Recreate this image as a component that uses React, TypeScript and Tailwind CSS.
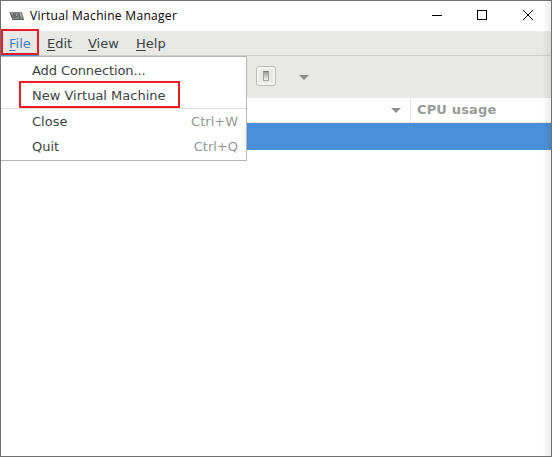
import React from "react";

const menus = [
  { label: "File", width: "w-[38px]", color: "text-[#3f7fc9]" },
  { label: "Edit", width: "w-[41px]", color: "text-[#3c4245]" },
  { label: "View", width: "w-[48px]", color: "text-[#3c4245]" },
  { label: "Help", width: "w-[48px]", color: "text-[#3c4245]" },
];

function AppIcon() {
  return (
    <svg width="16" height="10" viewBox="0 0 16 10" className="block shrink-0">
      <path d="M0.500 1h12.500l2 7H3z" fill="#858687" />
      <path d="M1 1.500l2.500 5.500 1.500-5M6 7V2.500l2 3.500 1.500-3.500L11 7" fill="none" stroke="#55585a" strokeWidth="1" />
      <path d="M2.500 1.500l1.500 2M7 3l1 2M11 2l1.500 4" stroke="#c9c9c9" strokeWidth="0.800" />
      <path d="M3 8.500h12" stroke="#606162" />
    </svg>
  );
}

function TitleBar() {
  return (
    <header className="flex h-[30px] shrink-0 items-center bg-white pl-2">
      <AppIcon />
      <h1 className="ml-[5px] font-['Open_Sans','Noto_Sans',sans-serif] text-[12px] leading-[16px] tracking-[0.31px] text-black whitespace-nowrap">
        Virtual Machine Manager
      </h1>
      <div className="ml-auto flex items-center">
        <svg width="46" height="30" viewBox="0 0 46 30" shapeRendering="crispEdges">
          <path d="M18 14.500h10" stroke="#000" />
        </svg>
        <svg width="45" height="30" viewBox="0 0 45 30" shapeRendering="crispEdges">
          <path d="M17.500 9.500h9v9h-9z" fill="none" stroke="#000" />
        </svg>
        <svg width="46" height="30" viewBox="0 0 46 30">
          <path d="M18 9l10 10M28 9L18 19" stroke="#000" />
        </svg>
      </div>
    </header>
  );
}

function MenuRow({ label, shortcut, height }: { label: string; shortcut?: string; height: string }) {
  return (
    <div className={`flex items-center justify-between pl-[30px] pr-2 text-[#3c4245] ${height}`}>
      <span>{label}</span>
      {shortcut && <span className="text-[#949796]">{shortcut}</span>}
    </div>
  );
}

function FileMenu() {
  return (
    <div className="absolute top-[55px] left-0 z-10 h-[105px] w-[246px] border border-l-0 border-[#b6b6b3] bg-white pl-px">
      <div className="h-[26px] pt-px tracking-[-0.1px]">
        <MenuRow label="Add Connection..." height="h-[25px]" />
      </div>
      <MenuRow label="New Virtual Machine" height="h-[25px]" />
      <div className="-ml-px h-px bg-[#dededc]" />
      <MenuRow label="Close" shortcut="Ctrl+W" height="h-[25px]" />
      <MenuRow label="Quit" shortcut="Ctrl+Q" height="h-[25px]" />
      <div className="absolute top-[24px] left-[18px] h-[27px] w-[161px] border-2 border-[#ed1c24]" />
    </div>
  );
}

function Arrow() {
  return (
    <svg width="10" height="5" viewBox="0 0 10 5" className="block">
      <path d="M0 0h10L5 5z" fill="#8b8e8b" />
    </svg>
  );
}

export default function App() {
  return (
    <div className="relative flex h-[457px] w-[552px] flex-col overflow-hidden border border-[#707070] bg-white font-['DejaVu_Sans',sans-serif] text-[13px] leading-[16px]">
      <TitleBar />
      <nav className="flex h-[25px] shrink-0 items-center border-b border-[#cfcfcd] bg-[#e8e8e6] pt-px">
        {menus.map((m) => (
          <span key={m.label} className={`pl-2 ${m.width} ${m.color}`}>
            <span className="underline decoration-1 underline-offset-2">{m.label[0]}</span>
            {m.label.slice(1)}
          </span>
        ))}
      </nav>
      <div className="flex h-[42px] shrink-0 items-center bg-[#e8e8e6] pb-[2px] pl-[255px]">
        <div className="flex h-5 w-5 items-center justify-center rounded-[3px] border border-[#b9bcb9] bg-[#f5f5f4]">
          <div className="flex h-[14px] w-[14px] items-center justify-center bg-[#e9e9e8]">
            <div className="h-[10px] w-[6px] border border-[#a2a3a1] border-t-[#777876] bg-linear-to-b from-[#9c9d9b] to-[#f4f4f3]" />
          </div>
        </div>
        <div className="ml-[23px] pt-[2px]"><Arrow /></div>
      </div>
      <div className="flex h-[25px] shrink-0 border-b border-[#e6e6e4]">
        <div className="flex w-[410px] items-center justify-end border-r border-[#e6e6e4] pr-[9px]"><Arrow /></div>
        <div className="flex items-center pl-[6px] font-bold tracking-[0.15px] text-[#989b98]">CPU usage</div>
      </div>
      <div className="h-[27px] shrink-0 bg-[#4a90d9]" />
      <div className="flex-1" />
      <div className="absolute top-0 right-0 h-full w-[9px] bg-linear-to-r from-black/0 to-black/7" />
      <div className="absolute top-[28px] left-0 z-20 h-[26px] w-[38px] border-2 border-[#ed1c24]" />
      <div className="absolute top-[54px] left-0 z-20 h-px w-[38px] bg-[#4a90d9]" />
      <FileMenu />
      <div className="absolute top-[259px] -left-px h-[27px] w-px bg-[#2d5789]" />
      <div className="absolute top-[136px] -left-px h-px w-px bg-[#303030]" />
      <div className="absolute -bottom-px left-[43px] h-px w-px bg-[#222]" />
      <div className="absolute -bottom-px left-[48px] h-px w-px bg-[#222]" />
      <div className="absolute -bottom-px left-[488px] h-px w-px bg-[#222]" />
    </div>
  );
}
